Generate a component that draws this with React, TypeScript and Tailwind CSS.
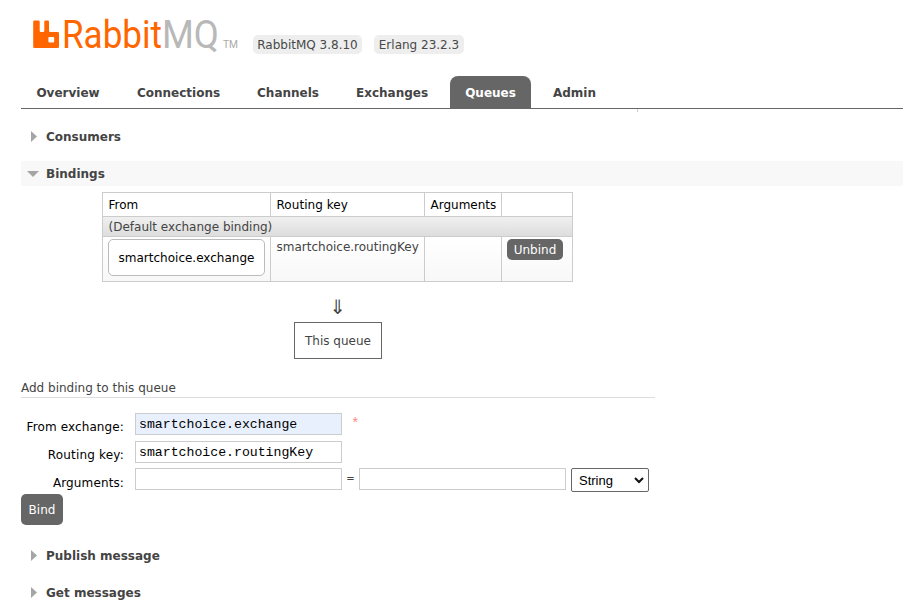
import type { ReactNode } from 'react';

function Logo() {
  return (
    <svg width="240" height="60" viewBox="0 0 240 60" className="block shrink-0">
      <path
        d="M34.200 20.500h4.300q1.200 0 1.200 1.200v9.100q0 1.200 1.200 1.200h2.200q1.200 0 1.200-1.200v-9.100q0-1.200 1.200-1.200h2.300q1.200 0 1.200 1.200v9.100q0 1.200 1.200 1.200h7.600q1.200 0 1.200 1.200v13.600q0 1.200-1.200 1.200h-23.400q-1.200 0-1.200-1.200v-25.100q0-1.200 1.200-1.200zM49.400 37q-1 0-1 1v3.600q0 1 1 1h3.800q1 0 1-1v-3.600q0-1-1-1z"
        fill="#ff6600"
        fillRule="evenodd"
      />
      <g fontFamily="Roboto, sans-serif">
        <text x="62" y="48" fontSize="38">
          <tspan textLength="100" lengthAdjust="spacingAndGlyphs" fill="#ff6600">Rabbit</tspan>
          <tspan textLength="57" lengthAdjust="spacingAndGlyphs" fill="#b8b8b8">MQ</tspan>
        </text>
        <text x="223" y="48" fontSize="10" textLength="15" lengthAdjust="spacingAndGlyphs" fill="#aaaaaa">TM</text>
      </g>
    </svg>
  );
}

function Section({ title, open = false }: { title: string; open?: boolean }) {
  return (
    <div className={`ml-[21px] flex h-[25px] items-center ${open ? 'bg-[#f8f8f8]' : ''}`}>
      <div className="flex w-[25px] pl-[6px]">
        {open ? (
          <svg width="12" height="12" viewBox="0 0 12 12"><path d="M0 3h12l-6 6z" fill="#a5a5a5" /></svg>
        ) : (
          <svg width="12" height="12" viewBox="0 0 12 12"><path d="M4 0v11l6-5.500z" fill="#a5a5a5" /></svg>
        )}
      </div>
      <h2 className="text-[12px] font-bold leading-4">{title}</h2>
    </div>
  );
}

function Tab({ width, active = false, children }: { width: string; active?: boolean; children: ReactNode }) {
  return (
    <div className={`flex h-8 items-center justify-center rounded-t-lg pt-px text-[12px] font-bold ${width} ${active ? 'bg-[#666666] text-white' : ''}`}>
      {children}
    </div>
  );
}

function Field({ value = '', filled = false }: { value?: string; filled?: boolean }) {
  return (
    <div className={`flex h-[22px] w-[207px] items-center border border-[#cccccc] pt-px pl-[3px] font-['Liberation_Mono',monospace] text-[13.200px] text-black ${filled ? 'bg-[#e8f0fe]' : ''}`}>
      {value}
    </div>
  );
}

export default function App() {
  return (
    <div className="h-[603px] w-[903px] overflow-hidden bg-white font-['DejaVu_Sans',sans-serif] text-[12px] leading-4 text-[#444444]">
      <header className="flex h-[76px]">
        <Logo />
        <div className="mt-[35px] ml-[13px] flex h-[19px] gap-3 text-[#484848]">
          <span className="flex w-[109px] items-center justify-center rounded-[5px] bg-[#eeeeee]">RabbitMQ 3.8.10</span>
          <span className="flex w-[90px] items-center justify-center rounded-[5px] bg-[#eeeeee]">Erlang 23.2.3</span>
        </div>
      </header>
      <nav className="ml-[21px] flex h-[33px] gap-[7px] border-b border-[#666666]">
        <Tab width="w-[94px]">Overview</Tab>
        <Tab width="w-[113px]">Connections</Tab>
        <Tab width="w-[92px]">Channels</Tab>
        <Tab width="w-[102px]">Exchanges</Tab>
        <Tab width="w-[81px]" active>Queues</Tab>
        <Tab width="w-[73px]">Admin</Tab>
      </nav>
      <div className="ml-[637px] h-[3px] w-px bg-[#cccccc]" />
      <div className="mt-3"><Section title="Consumers" /></div>
      <div className="mt-3"><Section title="Bindings" open /></div>

      <div className="mt-[6px] ml-[102px] w-[471px] border border-[#cccccc]">
        <div className="grid h-6 grid-cols-[168px_154px_77px_70px] border-b border-[#cccccc] text-black">
          <div className="border-r border-[#cccccc] pt-1 pl-[5.500px]">From</div>
          <div className="border-r border-[#cccccc] pt-1 pl-[5.500px] tracking-[0.050px]">Routing key</div>
          <div className="border-r border-[#cccccc] pt-1 pl-[5.500px]">Arguments</div>
          <div />
        </div>
        <div className="h-5 border-b border-[#cccccc] bg-linear-to-b from-[#f0f0f0] to-[#dddddd] pt-[2px] pl-[5.500px]">(Default exchange binding)</div>
        <div className="grid h-11 grid-cols-[168px_154px_77px_70px] bg-linear-to-b from-white to-[#f8f8f8]">
          <div className="border-r border-[#cccccc] pt-[2px] pl-[5px]">
            <div className="flex h-[37px] w-[157px] items-center justify-center rounded-[5px] border border-[#bbbbbb] bg-white text-black">smartchoice.exchange</div>
          </div>
          <div className="border-r border-[#cccccc] pt-[2px] pl-[5.500px]">smartchoice.routingKey</div>
          <div className="border-r border-[#cccccc]" />
          <div className="pt-[2px] pl-[5px]">
            <button className="flex h-[21px] w-14 items-center justify-center rounded-[5px] bg-[#666666] text-white">Unbind</button>
          </div>
        </div>
      </div>

      <div className="mt-[14px] ml-[294px] flex w-[88px] flex-col items-center">
        <div className="h-[26px] text-[20px] leading-[23px]">⇓</div>
        <div className="flex h-[37px] w-[88px] items-center justify-center border border-[#666666]">This queue</div>
      </div>

      <div className="mt-5 ml-[21px] h-[19px] w-[634px] border-b border-[#dddddd] pt-px">Add binding to this queue</div>
      <form className="mt-[15px] ml-[21px]">
        <div className="flex h-7">
          <label className="mt-[6px] mr-[11px] w-[103px] text-right tracking-[0.120px] text-black">From exchange:</label>
          <Field value="smartchoice.exchange" filled />
          <span className="mt-[3px] ml-[9px] font-['Liberation_Mono',monospace] text-[14px] text-[#ff8888]">*</span>
        </div>
        <div className="flex h-[27px]">
          <label className="mt-[6px] mr-[11px] w-[103px] text-right tracking-[0.180px] text-black">Routing key:</label>
          <Field value="smartchoice.routingKey" />
        </div>
        <div className="flex h-[26px]">
          <label className="mt-[7px] mr-[11px] w-[103px] text-right tracking-[0.120px] text-black">Arguments:</label>
          <Field />
          <span className="mt-[3px] w-[17px] text-center text-[10px]">=</span>
          <Field />
          <div className="ml-[5px] flex h-6 w-[78px] items-center justify-between rounded-[2px] border border-[#666666] pt-px pr-1 pl-[7px] font-['Liberation_Sans',sans-serif] text-[13px] text-black">
            String
            <svg width="10" height="7" viewBox="0 0 10 7"><path d="M1 1l4 4 4-4" fill="none" stroke="#111111" strokeWidth="2" /></svg>
          </div>
        </div>
        <button type="button" className="flex h-[31px] w-[42px] items-center justify-center rounded-[5px] bg-[#666666] text-white">Bind</button>
      </form>
      <div className="mt-[18px]"><Section title="Publish message" /></div>
      <div className="mt-3"><Section title="Get messages" /></div>
    </div>
  );
}
